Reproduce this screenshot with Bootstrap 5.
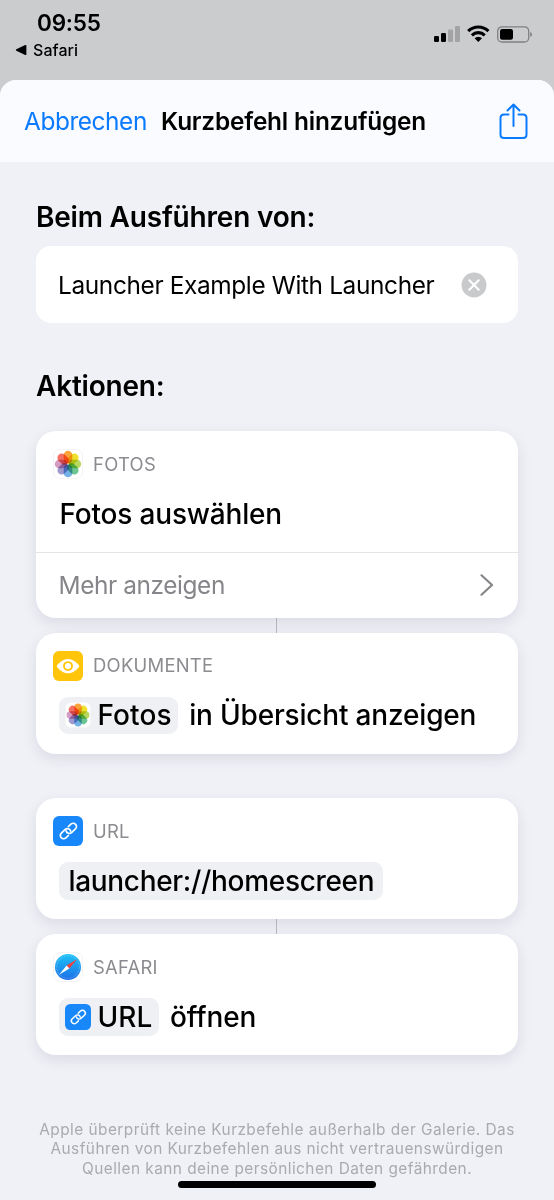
<!DOCTYPE html>
<html lang="de">
<head>
<meta charset="utf-8">
<meta name="viewport" content="width=device-width, initial-scale=1">
<title>Kurzbefehl hinzufügen</title>
<link href="https://cdn.jsdelivr.net/npm/bootstrap@5.3.0/dist/css/bootstrap.min.css" rel="stylesheet">
<style>
  body { font-family: Inter, "Liberation Sans", sans-serif; background: #cbccce; color: #000; width: 554px; height: 1200px; overflow: hidden; line-height: 1; }
  svg { display: block; flex: none; }
  .statusbar { height: 80px; padding: 9px 21px 0 15px; }
  .clock { font-size: 22.5px; font-weight: 600; letter-spacing: -.2px; line-height: 28px; padding-left: 22px; }
  .back-app { font-size: 16px; font-weight: 500; letter-spacing: .06px; line-height: 26px; gap: 6px; }
  .sheet { height: 1120px; background: #f0f1f6; border-radius: 16px 16px 0 0; overflow: hidden; }
  .sheet-head { height: 83px; background: #fafbfe; padding: 0 26px 0 24px; font-size: 24.4px; line-height: 30px; border-bottom: 1px solid #f2f3f7; }
  .cancel { color: #0a7aff; letter-spacing: -.42px; width: 137px; text-decoration: none; }
  .sheet-title { font-size: 24.4px; font-weight: 600; letter-spacing: -.2px; line-height: 30px; }
  .share { margin-bottom: 1px; }
  .sheet-body { padding: 0 36px; }
  .section-title { font-size: 28px; font-weight: 600; letter-spacing: -.2px; line-height: 36px; margin: 0; }
  .run-title { padding-top: 36px; }
  .actions-title { padding-top: 45px; margin-bottom: 27px; }
  .name-field { height: 77px; margin-top: 11px; background: #fff; border-radius: 15px; padding: 1px 31.5px 0 22px; font-size: 24.4px; letter-spacing: -.36px; }
  .action { border: 0; border-radius: 20px; background: #fff; color: #000; box-shadow: 0 5px 14px rgba(40, 40, 80, .1); }
  .action-main { height: 121px; padding: 18px 17px 0; }
  .app-label { gap: 10px; height: 30px; color: #8b8b90; font-size: 18.4px; letter-spacing: .28px; }
  .phrase { height: 37.5px; margin: 16px 0 0 6.5px; font-size: 28px; font-weight: 500; letter-spacing: -.18px; white-space: nowrap; }
  .token { height: 37.5px; margin-left: -.5px; border-radius: 9px; background: #eff0f4; }
  .token-icon { padding: 0 6px 0 5.5px; gap: 7px; letter-spacing: .1px; }
  .token-text { padding: 0 9px 0 9.5px; letter-spacing: -.32px; }
  .after-token { margin-left: 11.5px; }
  .next-group { margin-top: 44.5px; }
  .more { height: 65.5px; border-top: 1px solid #e4e4e7; padding: 0 24px 0 22.5px; font-size: 24.4px; letter-spacing: -.4px; color: #86868a; }
  .joint { width: 1px; height: 15px; margin-left: 239.5px; background: #bcbcc2; }
  .disclaimer { font-size: 15.4px; letter-spacing: .455px; line-height: 19.3px; color: #a9aaaf; margin: 65px -20px 0; }
  .home-bar { left: 178px; top: 1180.5px; width: 198px; height: 7.5px; border-radius: 4px; background: #000; }
</style>
</head>
<body>
<svg width="0" height="0" class="position-absolute" aria-hidden="true">
  <defs>
    <linearGradient id="sky" x1="0" y1="0" x2="0" y2="1"><stop offset="0" stop-color="#1cc3f6"/><stop offset="1" stop-color="#1d6ee8"/></linearGradient>
    <rect id="petal" x="-4.3" y="-13.2" width="8.6" height="12.6" rx="4.3"/>
    <symbol id="photos" viewBox="0 0 30 30">
      <rect x=".5" y=".5" width="29" height="29" rx="6.5" fill="#fff" stroke="#f4f4f6"/>
      <g transform="translate(15 15)" style="isolation:isolate">
        <use href="#petal" fill="#fba43c" style="mix-blend-mode:multiply"/>
        <use href="#petal" fill="#efe02c" transform="rotate(45)" style="mix-blend-mode:multiply"/>
        <use href="#petal" fill="#b8d860" transform="rotate(90)" style="mix-blend-mode:multiply"/>
        <use href="#petal" fill="#6cc592" transform="rotate(135)" style="mix-blend-mode:multiply"/>
        <use href="#petal" fill="#74b2e6" transform="rotate(180)" style="mix-blend-mode:multiply"/>
        <use href="#petal" fill="#a09acf" transform="rotate(225)" style="mix-blend-mode:multiply"/>
        <use href="#petal" fill="#d69bc2" transform="rotate(270)" style="mix-blend-mode:multiply"/>
        <use href="#petal" fill="#f57064" transform="rotate(315)" style="mix-blend-mode:multiply"/>
      </g>
    </symbol>
    <symbol id="eye" viewBox="0 0 30 30">
      <rect width="30" height="30" rx="6" fill="#ffc50a"/>
      <path d="M3.600 15.200C6.600 11 10.600 8.100 15 8.100s8.400 2.900 11.400 7.100C23.400 19.400 19.400 22.300 15 22.300S6.600 19.400 3.600 15.200z" fill="#fff"/>
      <circle cx="15" cy="15.100" r="4" fill="none" stroke="#ffc50a" stroke-width="1.900"/>
    </symbol>
    <symbol id="link" viewBox="0 0 30 30">
      <rect width="30" height="30" rx="6" fill="#1787f9"/>
      <g transform="translate(15.400 15) rotate(-43)" fill="none" stroke="#fff" stroke-width="1.700" stroke-linecap="round">
        <path d="M-3 3.300H-6.500a3.300 3.300 0 0 1 0-6.600H-1.300a3.300 3.300 0 0 1 2.900 4.900"/>
        <path d="M3-3.300H6.500a3.300 3.300 0 0 1 0 6.600H1.300a3.300 3.300 0 0 1-2.900-4.900"/>
      </g>
    </symbol>
    <symbol id="safari" viewBox="0 0 30 30">
      <rect x=".5" y=".5" width="29" height="29" rx="6.500" fill="#fff" stroke="#f4f4f6"/>
      <circle cx="15" cy="15" r="13" fill="url(#sky)"/>
      <circle cx="15" cy="15" r="11.300" fill="none" stroke="#fff" stroke-opacity=".4" stroke-width="1.200" stroke-dasharray=".5 .98"/>
      <path d="M24 7.200 13.600 13.500 16.400 16.500z" fill="#f0413f"/>
      <path d="M6 22.800 13.600 13.500 16.400 16.500z" fill="#fff"/>
    </symbol>
  </defs>
</svg>

<header class="statusbar d-flex justify-content-between">
  <div>
    <div class="clock">09:55</div>
    <div class="back-app d-flex align-items-center">
      <svg width="12" height="12" viewBox="0 0 12 12"><path d="M1.300 5.300 10.200 1q1.200-.400 1.200.800v8.400q0 1.200-1.200.800L1.300 6.700Q.200 6 1.300 5.300z"/></svg>
      <span>Safari</span>
    </div>
  </div>
  <div class="d-flex align-items-start pt-3">
    <svg width="100" height="20" viewBox="0 0 100 20">
      <rect x="1" y="11" width="5" height="6" rx="1.300"/>
      <rect x="8" y="8" width="5" height="9" rx="1.300"/>
      <g fill="#a3a3a5"><rect x="15" y="4.500" width="5" height="12.500" rx="1.300"/><rect x="22" y="1" width="5" height="16" rx="1.300"/></g>
      <g fill="none" stroke="#000" stroke-width="3.100">
        <path d="M35.200 6.200a14.300 14.300 0 0 1 20.200 0"/>
        <path d="M38.900 10.300a9.100 9.100 0 0 1 12.800 0"/>
      </g>
      <path d="M45.300 16.900 41.600 13.200a5.300 5.300 0 0 1 7.400 0z"/>
      <rect x="64.700" y="1.800" width="31" height="15.200" rx="4.300" fill="none" stroke="#808083" stroke-width="1.300"/>
      <rect x="67" y="4" width="13" height="10.700" rx="2.200"/>
      <path d="M97.200 7v5q1.800-.700 1.800-2.500T97.200 7z" fill="#808083"/>
    </svg>
  </div>
</header>

<main class="sheet">
  <div class="sheet-head d-flex align-items-center">
    <a class="cancel">Abbrechen</a>
    <h1 class="sheet-title mb-0">Kurzbefehl hinzufügen</h1>
    <svg class="share ms-auto" width="29" height="36" viewBox="0 0 29 36" fill="none" stroke="#0a7aff" stroke-width="2" stroke-linecap="round" stroke-linejoin="round">
      <path d="M9.500 11.500H5q-3.500 0-3.500 3.500v16.500q0 3.500 3.500 3.500h19q3.500 0 3.500-3.500V15q0-3.500-3.500-3.500h-4.500"/>
      <path d="M14.500 23V1.500M8.500 7.500l6-6 6 6"/>
    </svg>
  </div>

  <div class="sheet-body">
    <h2 class="section-title run-title">Beim Ausführen von:</h2>
    <div class="name-field d-flex align-items-center justify-content-between">
      <span class="text-nowrap">Launcher Example With Launcher</span>
      <svg width="26" height="26" viewBox="0 0 26 26"><circle cx="13" cy="13" r="12.500" fill="#c9cacc"/><path d="m8.300 8.300 9.400 9.400m0-9.400-9.400 9.400" stroke="#fff" stroke-width="2.100" stroke-linecap="round"/></svg>
    </div>

    <h2 class="section-title actions-title">Aktionen:</h2>

    <section class="action card">
      <div class="action-main">
        <div class="app-label d-flex align-items-center"><svg width="30" height="30"><use href="#photos"/></svg>FOTOS</div>
        <div class="phrase d-flex align-items-center">Fotos auswählen</div>
      </div>
      <div class="more d-flex align-items-center justify-content-between">
        <span>Mehr anzeigen</span>
        <svg width="14" height="22" viewBox="0 0 14 22" fill="none" stroke="#86868a" stroke-width="2.200" stroke-linecap="round" stroke-linejoin="round"><path d="M1.500 1.300 12 11l-10.500 9.700"/></svg>
      </div>
    </section>
    <div class="joint"></div>
    <section class="action card">
      <div class="action-main">
        <div class="app-label d-flex align-items-center"><svg width="30" height="30"><use href="#eye"/></svg>DOKUMENTE</div>
        <div class="phrase d-flex align-items-center">
          <span class="token token-icon d-flex align-items-center"><svg width="26" height="26"><use href="#photos"/></svg>Fotos</span>
          <span class="after-token">in Übersicht anzeigen</span>
        </div>
      </div>
    </section>

    <section class="action card next-group">
      <div class="action-main">
        <div class="app-label d-flex align-items-center"><svg width="30" height="30"><use href="#link"/></svg>URL</div>
        <div class="phrase d-flex align-items-center"><span class="token token-text d-flex align-items-center">launcher://homescreen</span></div>
      </div>
    </section>
    <div class="joint"></div>
    <section class="action card">
      <div class="action-main">
        <div class="app-label d-flex align-items-center"><svg width="30" height="30"><use href="#safari"/></svg>SAFARI</div>
        <div class="phrase d-flex align-items-center">
          <span class="token token-icon d-flex align-items-center"><svg width="26" height="26"><use href="#link"/></svg>URL</span>
          <span class="after-token">öffnen</span>
        </div>
      </div>
    </section>

    <p class="disclaimer text-center mb-0">Apple überprüft keine Kurzbefehle außerhalb der Galerie. Das<br>Ausführen von Kurzbefehlen aus nicht vertrauenswürdigen<br>Quellen kann deine persönlichen Daten gefährden.</p>
  </div>
</main>
<div class="home-bar position-absolute"></div>
<script src="https://cdn.jsdelivr.net/npm/bootstrap@5.3.0/dist/js/bootstrap.bundle.min.js"></script>
</body>
</html>
